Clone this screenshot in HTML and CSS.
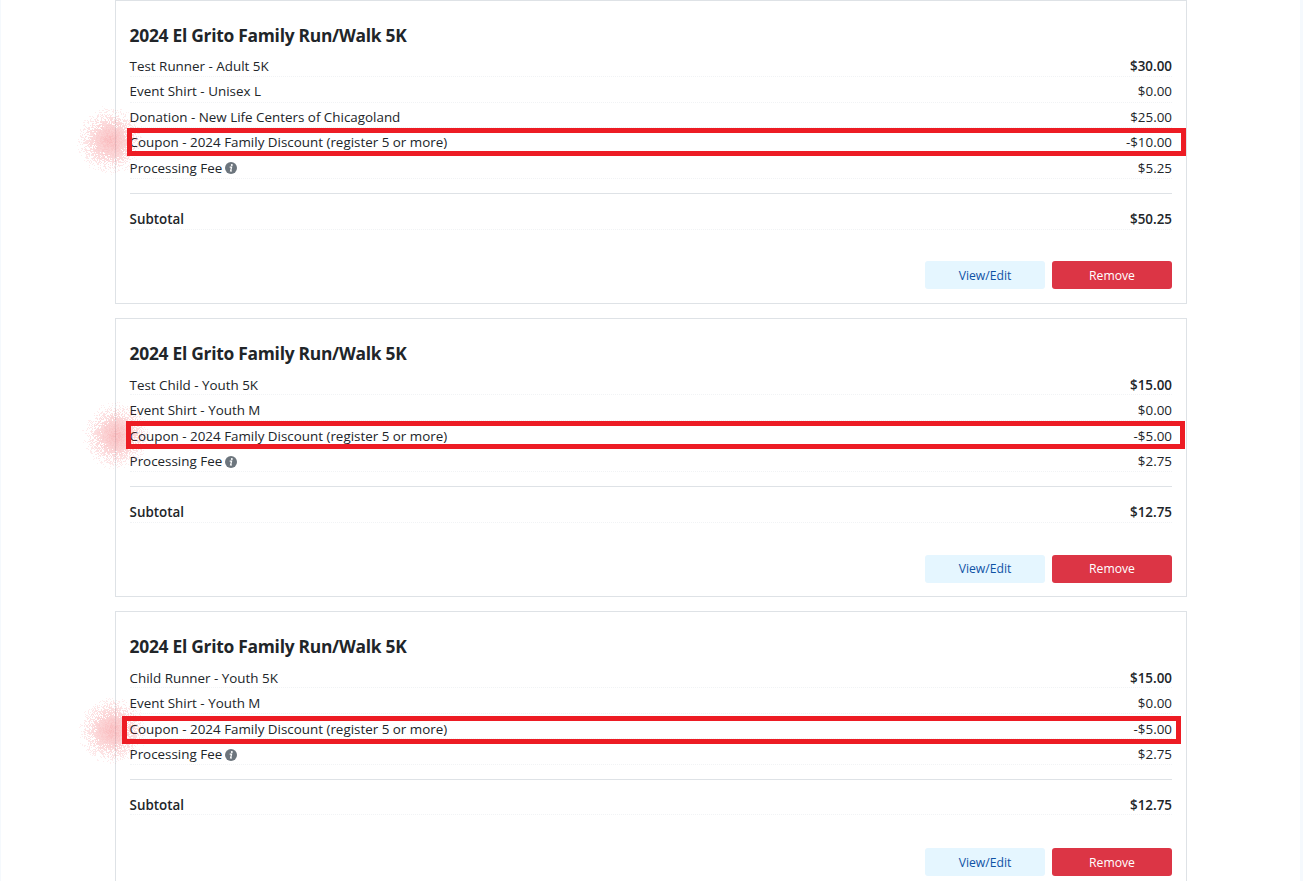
FILE: index.html
```html
<!DOCTYPE html>
<html lang="en">
<head>
    <meta charset="UTF-8">
    <meta name="viewport" content="width=device-width, initial-scale=1.0">
    <title>Cart</title>
    <link rel="stylesheet" href="styles.css">
</head>
<body>
    <svg class="sprite" aria-hidden="true">
        <symbol id="info" viewBox="0 0 12 12">
            <circle cx="6" cy="6" r="6" fill="#6c757d"/>
            <circle cx="6.8" cy="2.9" r="1" fill="#fff"/>
            <path d="M4.7 5.1H6.6L5.6 9H7" fill="none" stroke="#fff" stroke-width="1.2"/>
        </symbol>
    </svg>
    <main class="cart">
        <section class="card">
            <h2>2024 El Grito Family Run/Walk 5K</h2>
            <div class="row"><span>Test Runner - Adult 5K</span><span class="price strong">$30.00</span></div>
            <div class="row"><span>Event Shirt - Unisex L</span><span class="price">$0.00</span></div>
            <div class="row"><span>Donation - New Life Centers of Chicagoland</span><span class="price">$25.00</span></div>
            <div class="row"><span>Coupon - 2024 Family Discount (register 5 or more)</span><span class="price">-$10.00</span></div>
            <div class="row"><span>Processing Fee <svg class="info"><use href="#info"/></svg></span><span class="price">$5.25</span></div>
            <hr>
            <div class="row subtotal"><span>Subtotal</span><span class="price">$50.25</span></div>
            <div class="actions">
                <button class="btn btn-edit">View/Edit</button>
                <button class="btn btn-remove">Remove</button>
            </div>
        </section>
        <section class="card">
            <h2>2024 El Grito Family Run/Walk 5K</h2>
            <div class="row"><span>Test Child - Youth 5K</span><span class="price strong">$15.00</span></div>
            <div class="row"><span>Event Shirt - Youth M</span><span class="price">$0.00</span></div>
            <div class="row"><span>Coupon - 2024 Family Discount (register 5 or more)</span><span class="price">-$5.00</span></div>
            <div class="row"><span>Processing Fee <svg class="info"><use href="#info"/></svg></span><span class="price">$2.75</span></div>
            <hr>
            <div class="row subtotal"><span>Subtotal</span><span class="price">$12.75</span></div>
            <div class="actions">
                <button class="btn btn-edit">View/Edit</button>
                <button class="btn btn-remove">Remove</button>
            </div>
        </section>
        <section class="card">
            <h2>2024 El Grito Family Run/Walk 5K</h2>
            <div class="row"><span>Child Runner - Youth 5K</span><span class="price strong">$15.00</span></div>
            <div class="row"><span>Event Shirt - Youth M</span><span class="price">$0.00</span></div>
            <div class="row"><span>Coupon - 2024 Family Discount (register 5 or more)</span><span class="price">-$5.00</span></div>
            <div class="row"><span>Processing Fee <svg class="info"><use href="#info"/></svg></span><span class="price">$2.75</span></div>
            <hr>
            <div class="row subtotal"><span>Subtotal</span><span class="price">$12.75</span></div>
            <div class="actions">
                <button class="btn btn-edit">View/Edit</button>
                <button class="btn btn-remove">Remove</button>
            </div>
        </section>
    </main>

    <!-- Markers over the coupon lines -->
    <canvas class="spray spray-1" width="70" height="70"></canvas>
    <canvas class="spray spray-2" width="70" height="70"></canvas>
    <canvas class="spray spray-3" width="70" height="70"></canvas>
    <div class="marker marker-1"></div>
    <div class="marker marker-2"></div>
    <div class="marker marker-3"></div>

    <script src="script.js"></script>
</body>
</html>
```
FILE: styles.css
```css
* {
    box-sizing: border-box;
}
body {
    margin: 0;
    height: 881px;
    overflow: hidden;
    position: relative;
    background: #f5f9fd;
    color: #212529;
    font-family: "Open Sans", "Noto Sans", sans-serif;
    font-size: 13.4px;
}
.sprite {
    display: none;
}
.cart {
    width: 1299px;
    height: 881px;
    margin-left: 1px;
    padding: 0 114px;
    overflow: hidden;
    background: #fff;
    display: flex;
    flex-direction: column;
    gap: 14.4px;
}
.card {
    flex: none;
    width: 1072px;
    border: 1px solid #dee2e6;
    padding: 24px 14px 13.5px 13.6px;
}
h2 {
    margin: 0 0 5px;
    font-size: 17.4px;
    font-weight: 700;
    line-height: 21.5px;
    letter-spacing: -0.27px;
    white-space: nowrap;
}
.row {
    display: flex;
    justify-content: space-between;
    height: 25.5px;
    padding-top: 4px;
    line-height: 21px;
    border-bottom: 1px dotted #f1f3f5;
    white-space: nowrap;
}
.card + .card .row {
    padding-top: 4.8px;
}
.card + .card + .card .row {
    padding-top: 5.1px;
}
.card .row.subtotal,
.card + .card .row.subtotal {
    padding-top: 5px;
}
.strong,
.subtotal {
    font-weight: 600;
}
.info {
    width: 12px;
    height: 12px;
    margin-left: -1px;
    vertical-align: -1.5px;
}
hr {
    margin: 14.4px 0 10px;
    border: 0;
    border-top: 1px solid #dee2e6;
}
.actions {
    display: flex;
    justify-content: flex-end;
    gap: 7px;
    margin-top: 31.5px;
}
.card + .card {
    padding-bottom: 13px;
}
.card + .card .actions {
    margin-top: 32px;
}
.card + .card + .card .actions {
    margin-top: 32.6px;
}
.btn {
    width: 120px;
    height: 28px;
    padding: 0;
    border: 0;
    border-radius: 3px;
    font-family: inherit;
    font-size: 12.2px;
}
.btn-edit {
    background: #e5f6ff;
    color: #0f52a5;
}
.btn-remove {
    background: #dc3545;
    color: #fff;
}
.marker {
    position: absolute;
    width: 1059px;
    height: 28px;
    border: 5px solid #ed1c24;
}
.marker-1 {
    left: 127px;
    top: 128px;
}
.marker-2 {
    left: 126px;
    top: 421px;
}
.marker-3 {
    left: 122px;
    top: 716px;
}
.spray {
    position: absolute;
}
.spray-1 {
    left: 75px;
    top: 105px;
}
.spray-2 {
    left: 81px;
    top: 400px;
}
.spray-3 {
    left: 77px;
    top: 695px;
}
```
FILE: script.js
```js
// seeded so the speckles are the same on every load
let seed = 7;
function rand() {
    seed = (seed * 16807) % 2147483647;
    return seed / 2147483647;
}

document.querySelectorAll('.spray').forEach((canvas) => {
    const ctx = canvas.getContext('2d');
    for (let y = 0; y < 70; y++) {
        for (let x = 0; x < 70; x++) {
            const d = Math.hypot(x - 35, y - 35) / 35;
            if (d < 1 && rand() < 1.6 * (1 - d)) {
                ctx.fillStyle = `rgba(237, 28, 36, ${0.06 + 0.22 * (1 - d) * (0.8 + 0.4 * rand())})`;
                ctx.fillRect(x, y, 1, 1);
            }
        }
    }
});
```
